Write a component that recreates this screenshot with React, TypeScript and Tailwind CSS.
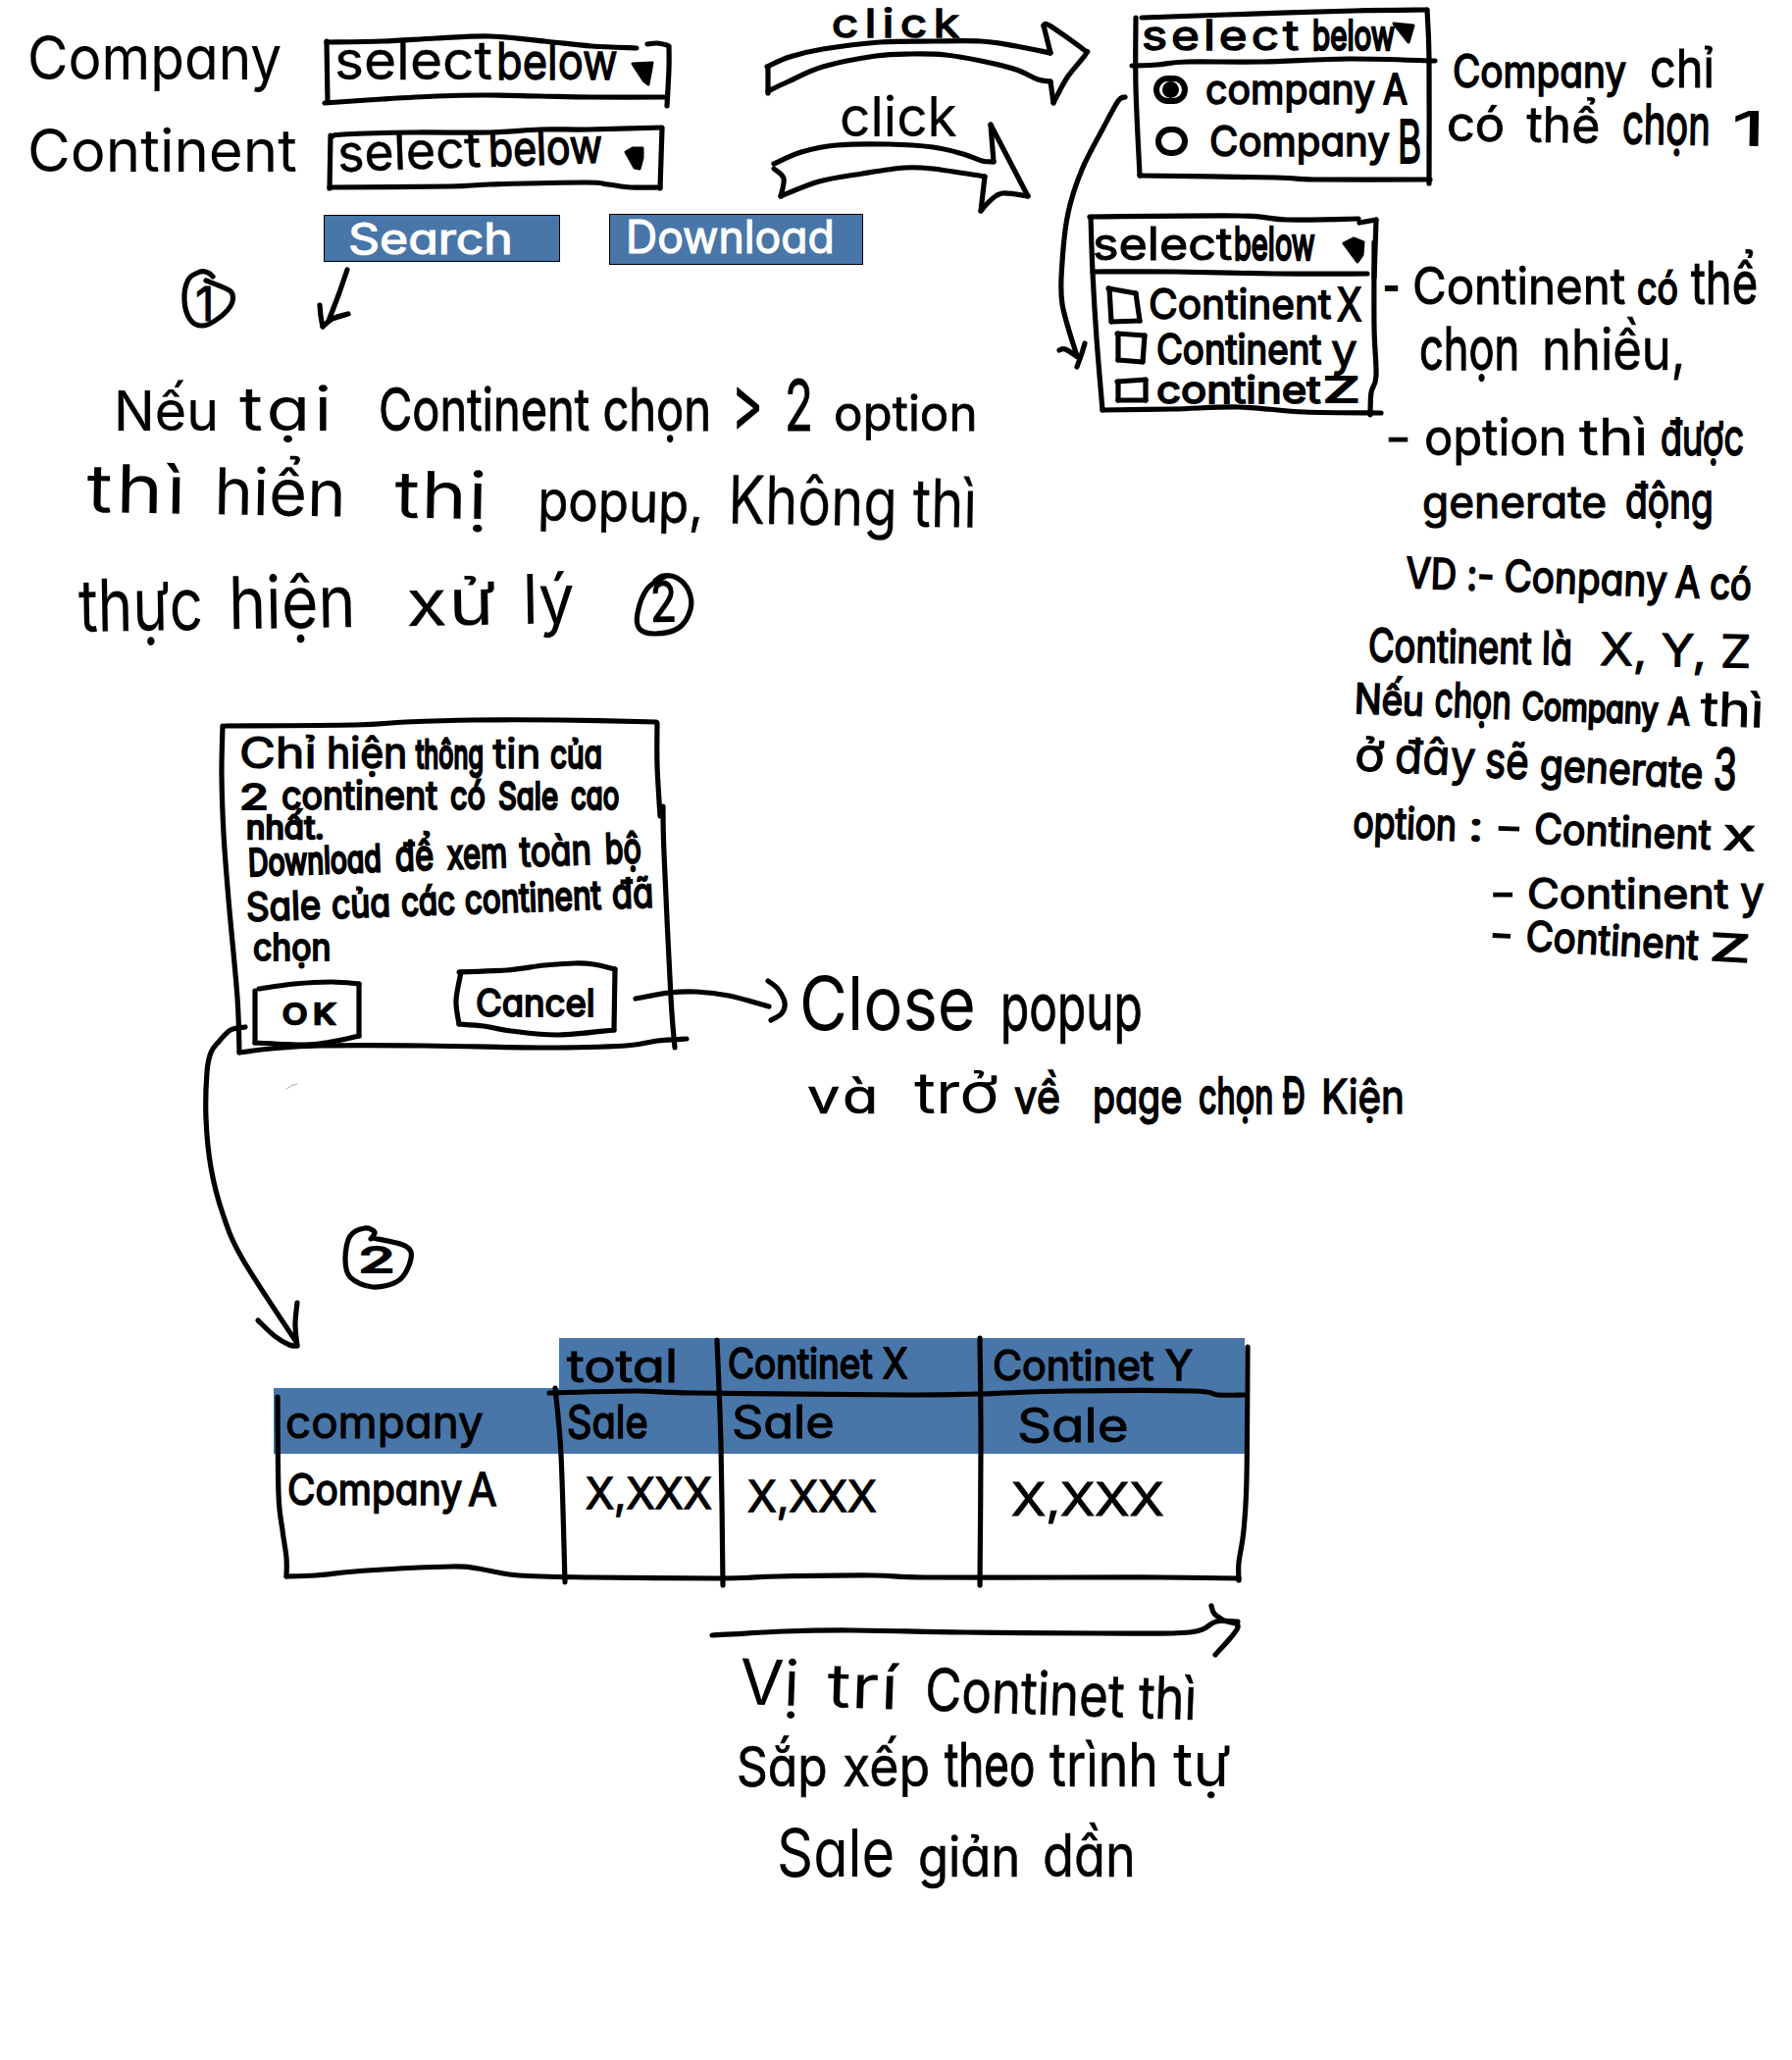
import { useLayoutEffect, useRef } from "react";

type WordData = [text: string, width: number, size: number];

/** One handwritten word, stretched to the given width and inked with an even pen thickness. */
function Word({ t, w, s }: { t: string; w: number; s: number }) {
  const ref = useRef<HTMLSpanElement>(null);
  useLayoutEffect(() => {
    const el = ref.current;
    if (!el || !t) return;
    const fit = () => {
      el.style.letterSpacing = "0px";
      const natural = w / el.offsetWidth;
      if (natural > 1.18 && t.length > 1) {
        el.style.letterSpacing = `${(w / 1.18 - el.offsetWidth) / t.length}px`;
      }
      const scale = w / el.offsetWidth;
      el.style.transform = `scaleX(${scale})`;
      el.style.webkitTextStroke = `${Math.max(0, 5.2 - 0.09 * s * Math.min(scale, 1)).toFixed(2)}px currentColor`;
    };
    fit();
    document.fonts?.ready.then(fit);
  }, [t, w, s]);
  return (
    <span className="inline-block shrink-0 whitespace-pre leading-none" style={{ width: w, fontSize: s }}>
      <span ref={ref} className="inline-block origin-left">
        {t}
      </span>
    </span>
  );
}

/** A written line: words share a baseline and spread over the line's width. An empty entry is a double space. */
function Line({ className, words }: { className: string; words: WordData[] }) {
  return (
    <div className={`flex origin-left items-baseline justify-between ${className}`}>
      {words.map(([t, w, s], i) => (
        <Word key={i} t={t} w={w} s={s} />
      ))}
    </div>
  );
}

/** Smooth pen stroke through "x,y x,y ..." points. */
function curve(points: string) {
  const p = points.split(" ").map((s) => s.split(",").map(Number));
  let d = `M${p[0][0]} ${p[0][1]}`;
  for (let i = 0; i < p.length - 1; i++) {
    const a = p[i - 1] ?? p[i];
    const b = p[i];
    const c = p[i + 1];
    const e = p[i + 2] ?? c;
    d += `C${b[0] + (c[0] - a[0]) / 6} ${b[1] + (c[1] - a[1]) / 6} ${c[0] - (e[0] - b[0]) / 6} ${c[1] - (e[1] - b[1]) / 6} ${c[0]} ${c[1]}`;
  }
  return d;
}

const strokes = [
  // company select
  "333,43 390,42 445,39 500,37 555,42 603,47 649,49",
  "660,45 670,44 680,46",
  "682,47 682,70 680,108",
  "333,42 334,103",
  "331,105 390,101 445,98 494,97 550,98 603,99 678,99",
  // continent select
  "337,138 336,192",
  "339,139 350,137 420,135 499,135 551,132 600,132 675,130",
  "675,131 673,192",
  "336,191 459,190 499,188 597,186 620,188 643,191 673,191",
  // arrow below the search button
  "354,275 345,301 335,327",
  "326,311 327,322 329,333",
  "329,333 339,325 355,320",
  // circled one
  "217,282 212,278 204,277 192,285 188,306 194,326 207,332 222,325 235,312 237,300 230,294 210,286",
  // first block arrow
  "782,68 805,58 839,50 897,43 951,42 1000,42 1036,47 1071,54",
  "1071,54 1064,26",
  "1064,26 1070,26 1104,50 1107,55 1088,79 1074,105",
  "1074,105 1071,83",
  "1071,83 1058,81 1036,71 1000,62 964,56 929,55 893,57 839,68 804,83 783,93",
  "783,68 783,95",
  // second block arrow
  "789,167 817,155 853,148 906,147 951,150 982,157 1001,164 1013,165",
  "1013,165 1010,127",
  "1010,127 1048,200",
  "1048,200 1022,197 1009,205 1000,215",
  "1000,215 1004,180",
  "1004,180 951,172 922,171 879,177 835,185 796,200",
  "796,200 799,182 789,172",
  // company menu
  "1164,18 1250,15 1380,11 1455,10",
  "1158,18 1158,90 1162,179",
  "1162,179 1300,181 1340,183 1458,183",
  "1455,10 1457,60 1457,187",
  "1154,67 1180,66 1210,63 1286,63 1375,60 1463,62",
  "1147,99 1140,103 1125,130 1103,173 1089,217 1083,267 1083,310 1098,363",
  "1080,357 1086,356 1099,364",
  "1106,350 1103,360 1098,374",
  // continent menu
  "1111,221 1263,220 1312,224 1385,223",
  "1386,227 1403,224",
  "1403,224 1401,283",
  "1112,221 1114,278 1118,345 1124,418",
  "1114,277 1196,277 1300,279 1394,279",
  "1401,247 1401,333 1403,383 1398,400 1397,423",
  "1124,418 1196,417 1263,415 1330,420 1408,421",
  // check boxes
  "1130,294 1158,299", "1158,299 1162,327", "1162,327 1133,328", "1133,328 1131,294",
  "1139,340 1167,342", "1167,342 1165,369", "1165,369 1140,367", "1140,367 1140,340",
  "1139,389 1168,387", "1168,387 1168,408", "1168,408 1140,408", "1140,408 1140,389",
  // circled two in the text
  "679,587 660,600 650,625 652,641 668,646 692,640 704,621 702,602 690,589 676,587 668,592",
  // popup frame
  "230,740 362,739 414,736 483,734 569,734 669,736",
  "670,737 670,780 673,832",
  "676,822 677,870 684,1017 688,1068",
  "227,740 226,790 228,850 233,917 242,1017 244,1073",
  "244,1073 276,1069 328,1066 431,1066 552,1068 638,1066 670,1061 700,1059",
  "264,1008 300,1003 338,1001 366,1003",
  "366,1003 366,1056",
  "366,1056 338,1062 310,1065 260,1063",
  "260,1063 260,1010",
  "468,991 517,989 555,984 586,982 605,983 627,988",
  "627,988 626,1050",
  "626,1050 569,1055 521,1051 493,1046 468,1044",
  "468,1044 465,1020 470,991",
  // cancel to close
  "648,1018 682,1012 710,1011 743,1015 784,1026",
  "783,1000 793,1008 800,1022 797,1033 786,1040",
  // ok to table
  "250,1047 235,1050 223,1062 215,1073 211,1093 210,1140 215,1190 227,1237 247,1283 302,1368",
  "263,1346 280,1362 295,1371 303,1372",
  "303,1372 301,1350 303,1328",
  // circled two above the table
  "378,1263 382,1256 372,1252 357,1260 352,1283 357,1302 380,1312 407,1305 419,1283 413,1270 380,1262",
  // table grid
  "283,1424 284,1523 288,1560 292,1588 292,1607",
  "292,1607 322,1606 374,1601 460,1597 487,1599 529,1606 604,1608 735,1609 794,1607 890,1606 942,1608 1090,1608 1182,1608 1263,1609",
  "566,1415 572,1483 576,1613",
  "731,1366 735,1473 737,1616",
  "999,1364 1000,1473 999,1616",
  "1272,1373 1271,1507 1268,1560 1263,1593 1263,1611",
  "560,1420 649,1418 708,1420 923,1422 997,1421 1090,1418 1216,1418 1242,1422 1268,1422",
  // sort direction arrow
  "726,1667 800,1663 868,1662 983,1664 1121,1665 1213,1664 1240,1653 1262,1653",
  "1235,1637 1238,1645 1248,1652 1262,1659 1239,1687",
];

const carets = [
  "M645 65L665 64L661 86L656 82Z",
  "M638 155L645 151L655 151L655 161L652 172L647 171Z",
  "M1421 24L1441 26L1436 43Z",
  "M1370 248L1380 243L1390 247L1389 260L1384 267Z",
];

/** Pen lines of the whole board: frames, arrows, circles and the table grid. */
function Ink() {
  return (
    <svg className="pointer-events-none absolute inset-0" width="1827" height="2100" viewBox="0 0 1827 2100" fill="none" stroke="#000" strokeLinecap="round" strokeLinejoin="round">
      {strokes.map((s, i) => (
        <path key={i} d={curve(s)} strokeWidth={5.2} />
      ))}
      {carets.map((d, i) => (
        <path key={i} d={d} fill="#000" strokeWidth={3} />
      ))}
      <path d="M292 1110Q297 1106 303 1105" stroke="#aaa" strokeWidth="1" />
    </svg>
  );
}

function SearchForm() {
  return (
    <section className="absolute left-[28px] top-[28px] flex flex-col">
      <div className="mb-[33px] grid h-[62px] grid-cols-[313px_auto] items-baseline">
        <Word t="Company" w={259} s={62} />
        <div className="flex items-baseline gap-1">
          <Word t="select" w={161} s={54} />
          <Word t="below" w={124} s={52} />
        </div>
      </div>
      <div className="grid h-[60px] grid-cols-[316px_auto] items-baseline">
        <Word t="Continent" w={275} s={60} />
        <div className="flex origin-left -rotate-2 items-baseline gap-2 pt-1">
          <Word t="select" w={146} s={52} />
          <Word t="below" w={116} s={48} />
        </div>
      </div>
      <div className="ml-[302px] mt-[35px] flex items-start gap-[50px] text-white">
        <button className="mt-px flex h-[48px] w-[241px] items-center border border-black bg-[#4876a8] pl-3.5">
          <Word t="Search" w={168} s={44} />
        </button>
        <button className="flex h-[52px] w-[259px] items-center border border-black bg-[#4876a8] pb-1.5 pl-4">
          <Word t="Download" w={213} s={46} />
        </button>
      </div>
    </section>
  );
}

function CompanyMenu() {
  return (
    <section className="absolute left-[1158px] top-[10px] grid w-[300px] grid-rows-[52px_52px_60px]">
      <div className="flex items-center gap-2.5 pl-1.5">
        <Word t="select" w={164} s={42} />
        <Word t="below" w={84} s={42} />
      </div>
      <div className="flex items-center gap-2 pl-[18px] pt-1.5">
        <span className="mr-[10px] flex h-[29px] w-[35px] shrink-0 items-center justify-center rounded-full border-[6px] border-black">
          <span className="size-[17px] rounded-full bg-black" />
        </span>
        <Word t="company" w={173} s={42} />
        <Word t="A" w={25} s={42} />
      </div>
      <div className="flex items-center gap-2 pl-5">
        <span className="mr-3.5 h-[30px] w-[33px] shrink-0 rounded-full border-[6px] border-black" />
        <Word t="Company" w={184} s={42} />
        <Word t="B" w={24} s={60} />
      </div>
    </section>
  );
}

function ContinentMenu() {
  return (
    <section className="absolute left-[1112px] top-[221px] grid w-[290px] grid-rows-[57px_64px_28px_54px]">
      <div className="flex items-center gap-0.5 pb-1 pl-0.5">
        <Word t="select" w={142} s={46} />
        <Word t="below" w={83} s={46} />
      </div>
      <div className="flex items-center gap-1.5 pl-[59px]">
        <Word t="Continent" w={186} s={42} />
        <Word t="X" w={25} s={46} />
      </div>
      <div className="flex items-center gap-2.5 pl-[67px]">
        <Word t="Continent" w={168} s={42} />
        <Word t="y" w={27} s={46} />
      </div>
      <div className="flex items-center gap-0.5 pl-[67px]">
        <Word t="continet" w={168} s={38} />
        <Word t="Z" w={38} s={36} />
      </div>
    </section>
  );
}

function CompanyNote() {
  return (
    <section className="absolute left-[1475px] top-[43px] flex flex-col">
      <Line className="ml-1.5 h-[52px] w-[267px]" words={[["Company", 177, 46], ["chỉ", 66, 54]]} />
      <Line className="h-[60px] w-[325px] rotate-1" words={[["có", 59, 48], ["thể", 75, 50], ["chọn", 90, 56], ["1", 34, 48]]} />
    </section>
  );
}

function ContinentNote() {
  return (
    <section className="absolute left-[1379px] top-[258px] flex flex-col">
      <Line className="ml-[31px] h-[67px] w-[382px]" words={[["-", 17, 50], ["Continent", 217, 52], ["có", 42, 46], ["thể", 68, 60]]} />
      <Line className="ml-[68px] h-[95px] w-[271px]" words={[["chọn", 102, 60], ["nhiều,", 146, 58]]} />
      <Line className="ml-[33px] h-[65px] w-[366px]" words={[["-", 27, 50], ["option", 146, 52], ["thì", 70, 52], ["được", 85, 52]]} />
      <Line className="ml-[71px] h-[76px] w-[297px]" words={[["generate", 188, 46], ["động", 90, 50]]} />
      <Line className="ml-[54px] h-[73px] w-[353px] rotate-2" words={[["VD", 52, 43], [":-", 28, 44], ["Conpany", 166, 44], ["A", 25, 44], ["có", 43, 44]]} />
      <Line className="ml-[16px] h-[52px] w-[390px] rotate-1" words={[["Continent là", 208, 46], ["X, Y, Z", 154, 46]]} />
      <Line className="ml-0.5 h-[49px] w-[418px] rotate-2" words={[["Nếu", 71, 42], ["chọn", 78, 48], ["Company", 139, 38], ["A", 22, 38], ["thì", 65, 48]]} />
      <Line className="ml-0.5 h-[78px] w-[390px] rotate-3" words={[["ở", 30, 46], ["đây", 82, 50], ["sẽ", 45, 50], ["generate", 167, 44], ["3", 24, 58]]} />
      <Line className="h-[73px] w-[411px] rotate-2" words={[["option", 106, 44], [":", 15, 42], ["-", 28, 44], ["Continent", 180, 42], ["x", 34, 46]]} />
      <Line className="ml-[140px] h-[43px] w-[280px]" words={[["-", 26, 44], ["Continent", 205, 42], ["y", 25, 46]]} />
      <Line className="ml-[140px] h-[40px] w-[266px] rotate-3" words={[["-", 24, 44], ["Continent", 176, 42], ["Z", 41, 38]]} />
    </section>
  );
}

function StepOne() {
  return (
    <section className="absolute left-[80px] top-[370px] flex flex-col">
      <Line
        className="ml-9 h-[93px] w-[881px]"
        words={[["Nếu", 107, 56], ["tại", 99, 62], ["", 0, 1], ["Continent chọn", 339, 60], [">", 32, 80], ["2", 29, 72], ["option", 147, 50]]}
      />
      <Line
        className="ml-2 h-[117px] w-[908px] rotate-1"
        words={[["thì", 105, 68], ["hiển", 134, 66], ["", 0, 1], ["thị", 96, 66], ["", 0, 1], ["popup,", 169, 56], ["Không thì", 254, 68]]}
      />
      <Line
        className="h-[80px] w-[610px] -rotate-1"
        words={[["thực", 127, 74], ["hiện", 130, 74], ["", 0, 1], ["xử", 93, 66], ["lý", 53, 70], ["", 0, 1], ["", 0, 1], ["2", 27, 56]]}
      />
    </section>
  );
}

function Popup() {
  return (
    <section className="absolute left-[244px] top-[745px] flex w-[426px] flex-col">
      <Line className="h-[46px] w-[370px]" words={[["Chỉ", 79, 44], ["hiện", 82, 44], ["thông", 69, 40], ["tin", 49, 42], ["của", 53, 40]]} />
      <Line className="h-[37px] w-[387px]" words={[["2", 30, 36], ["continent", 159, 40], ["có", 36, 40], ["Sale", 61, 38], ["cao", 49, 40]]} />
      <Line className="ml-[7px] h-[29px] w-[80px]" words={[["nhất.", 80, 32]]} />
      <Line className="ml-[9px] h-[46px] w-[401px] -rotate-2" words={[["Download", 136, 38], ["để", 39, 42], ["xem", 61, 42], ["toàn", 73, 42], ["bộ", 37, 42]]} />
      <Line className="ml-[7px] h-[43px] w-[415px] -rotate-2" words={[["Sale", 76, 40], ["của", 60, 40], ["các", 55, 40], ["continent", 139, 40], ["đã", 42, 42]]} />
      <Line className="ml-3.5 h-[38px] w-[79px]" words={[["chọn", 79, 38]]} />
      <div className="ml-4 flex items-start justify-between pr-[43px]">
        <button className="mt-[20px] flex h-[60px] w-[106px] items-center justify-center">
          <Word t="OK" w={59} s={28} />
        </button>
        <button className="flex h-[75px] w-[163px] items-center justify-center">
          <Word t="Cancel" w={122} s={38} />
        </button>
      </div>
    </section>
  );
}

function CloseNote() {
  return (
    <section className="absolute left-[815px] top-[984px] flex flex-col">
      <Line className="h-[101px] w-[350px]" words={[["Close", 180, 76], ["popup", 145, 66]]} />
      <Line
        className="ml-2 h-[58px] w-[609px]"
        words={[["và", 76, 50], ["", 0, 1], ["trở", 86, 58], ["về", 47, 48], ["", 0, 1], ["page", 91, 48], ["chọn Đ", 109, 50], ["Kiện", 85, 48]]}
      />
    </section>
  );
}

function SalesTable() {
  return (
    <section className="absolute left-[279px] top-[1364px] grid w-[990px] grid-cols-[291px_162px_267px_270px] grid-rows-[51px_67px_76px]">
      <div />
      <div className="flex items-center bg-[#4876a8] pl-2 pt-1">
        <Word t="total" w={113} s={46} />
      </div>
      <div className="flex items-center bg-[#4876a8] pl-2.5">
        <Word t="Continet X" w={183} s={42} />
      </div>
      <div className="flex items-center bg-[#4876a8] pl-[13px] pt-1">
        <Word t="Continet Y" w={204} s={42} />
      </div>
      <div className="flex items-center bg-[#4876a8] pl-3">
        <Word t="company" w={202} s={46} />
      </div>
      <div className="flex items-center bg-[#4876a8] pl-2">
        <Word t="Sale" w={83} s={46} />
      </div>
      <div className="flex items-center bg-[#4876a8] pl-3.5">
        <Word t="Sale" w={105} s={46} />
      </div>
      <div className="flex items-center bg-[#4876a8] pl-[38px] pt-2">
        <Word t="Sale" w={114} s={48} />
      </div>
      <div className="flex items-center gap-1.5 pb-1 pl-3.5">
        <Word t="Company" w={178} s={44} />
        <Word t="A" w={30} s={46} />
      </div>
      <div className="flex items-center pl-[27px] pt-1">
        <Word t="X,XXX" w={129} s={44} />
      </div>
      <div className="flex items-center pl-[30px] pt-2.5">
        <Word t="X,XXX" w={132} s={44} />
      </div>
      <div className="flex items-center pl-8 pt-4">
        <Word t="X,XXX" w={156} s={46} />
      </div>
    </section>
  );
}

function SortNote() {
  return (
    <section className="absolute left-[751px] top-[1682px] flex flex-col">
      <Line className="ml-[3px] h-[86px] w-[466px] rotate-2" words={[["Vị", 61, 64], ["trí", 73, 62], ["Continet thì", 277, 60]]} />
      <Line className="h-[86px] w-[504px]" words={[["Sắp", 93, 56], ["xếp", 89, 56], ["theo", 92, 62], ["trình", 111, 62], ["tự", 59, 62]]} />
      <Line className="ml-[41px] h-[68px] w-[366px]" words={[["Sale", 120, 68], ["giản", 104, 56], ["dần", 95, 60]]} />
    </section>
  );
}

export default function App() {
  return (
    <main className="relative h-[2100px] w-[1827px] overflow-hidden bg-white font-['Inter','Open_Sans',sans-serif] text-black [font-feature-settings:'cv11']">
      <SearchForm />
      <div className="absolute left-[848px] top-[4px] flex flex-col gap-[47px]">
        <Word t="click" w={136} s={40} />
        <div className="pl-2">
          <Word t="click" w={120} s={56} />
        </div>
      </div>
      <CompanyMenu />
      <ContinentMenu />
      <CompanyNote />
      <ContinentNote />
      <div className="absolute left-[187px] top-[281px] flex h-[58px] w-[44px] items-center justify-center">
        <Word t="1" w={20} s={48} />
      </div>
      <StepOne />
      <Popup />
      <CloseNote />
      <div className="absolute left-[352px] top-[1255px] flex h-[58px] w-[64px] items-center justify-center">
        <Word t="2" w={38} s={36} />
      </div>
      <SalesTable />
      <SortNote />
      <Ink />
    </main>
  );
}
